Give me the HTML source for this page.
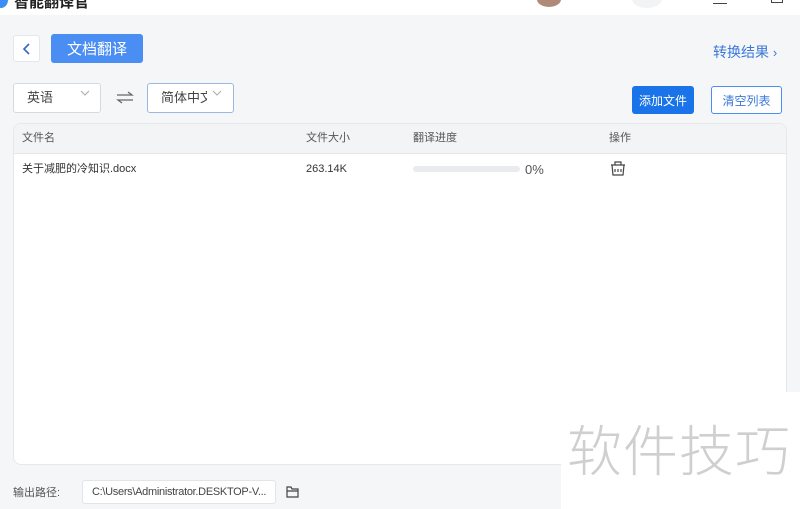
<!DOCTYPE html>
<html><head><meta charset="utf-8"><style>
*{margin:0;padding:0;box-sizing:border-box}
body{width:800px;height:509px;overflow:hidden;background:#f5f6f8;font-family:"Liberation Sans","Noto Sans CJK SC",sans-serif;position:relative;color:#333}
.a{position:absolute}
.top{left:0;top:0;width:800px;height:15px;background:#fff}
.btn{display:flex;align-items:center;justify-content:center}
.t{line-height:14px}
</style></head><body>
<div class="a top"></div>
<div class="a" style="left:-6px;top:-8px;width:14px;height:16px;border-radius:50%;background:#3a8ef6"></div>
<div class="a" style="left:14px;top:-9px;font-size:15px;font-weight:bold;color:#222">智能翻译官</div>
<div class="a" style="left:537px;top:-8px;width:24px;height:15px;border-radius:50%;background:#b08a78"></div>
<div class="a" style="left:632px;top:-10px;width:30px;height:18px;border-radius:50%;background:#f2f3f5"></div>
<div class="a" style="left:713px;top:3px;width:14px;height:1px;background:#444"></div>
<div class="a" style="left:771px;top:-6px;width:12px;height:9px;border:1px solid #444"></div>

<div class="a btn" style="left:13px;top:35px;width:27px;height:27px;background:#fff;border:1px solid #e3e6eb;border-radius:3px">
<svg width="10" height="12" viewBox="0 0 10 12"><path d="M7 1 L2 6 L7 11" stroke="#3566c8" stroke-width="1.6" fill="none"/></svg></div>
<div class="a btn" style="left:51px;top:34px;width:92px;height:29px;background:#4a8ef4;border-radius:3px;color:#fff;font-size:15px">文档翻译</div>
<div class="a t" style="left:713px;top:45px;font-size:14px;color:#3b78d8">转换结果 <span style="font-size:13px">›</span></div>

<div class="a" style="left:13px;top:83px;width:88px;height:30px;background:#fff;border:1px solid #d6d9de;border-radius:3px"></div>
<div class="a t" style="left:27px;top:91px;font-size:13px;color:#444">英语</div>
<svg class="a" style="left:80px;top:90px" width="10" height="6" viewBox="0 0 10 6"><path d="M1 1 L5 5 L9 1" stroke="#aaa" fill="none"/></svg>
<svg class="a" style="left:116px;top:91px" width="18" height="13" viewBox="0 0 18 13"><path d="M1 4 H16 L12 1 M17 9 H2 L6 12" stroke="#666" stroke-width="1.3" fill="none"/></svg>
<div class="a" style="left:147px;top:83px;width:87px;height:30px;background:#fff;border:1px solid #9cb8e0;border-radius:3px"></div>
<div class="a t" style="left:161px;top:91px;font-size:13px;color:#444;width:46px;overflow:hidden;white-space:nowrap">简体中文</div>
<svg class="a" style="left:212px;top:90px" width="10" height="6" viewBox="0 0 10 6"><path d="M1 1 L5 5 L9 1" stroke="#aaa" fill="none"/></svg>

<div class="a btn" style="left:632px;top:86px;width:62px;height:28px;background:#1a73e8;border-radius:3px;color:#fff;font-size:12px">添加文件</div>
<div class="a btn" style="left:711px;top:86px;width:71px;height:28px;background:#fff;border:1px solid #4a8ef4;border-radius:3px;color:#3b78d8;font-size:12px">清空列表</div>

<div class="a" style="left:13px;top:123px;width:774px;height:342px;background:#fff;border:1px solid #e6e8ec;border-radius:8px;overflow:hidden">
<div style="height:30px;background:#f3f4f6;border-bottom:1px solid #e6e8ec"></div>
</div>
<div class="a t" style="left:22px;top:131px;font-size:11px;color:#555">文件名</div>
<div class="a t" style="left:306px;top:131px;font-size:11px;color:#555">文件大小</div>
<div class="a t" style="left:413px;top:131px;font-size:11px;color:#555">翻译进度</div>
<div class="a t" style="left:609px;top:131px;font-size:11px;color:#555">操作</div>
<div class="a t" style="left:22px;top:162px;font-size:11px;color:#333">关于减肥的冷知识.docx</div>
<div class="a t" style="left:306px;top:162px;font-size:11px;color:#333">263.14K</div>
<div class="a" style="left:413px;top:166px;width:107px;height:6px;background:#e9ebef;border-radius:3px"></div>
<div class="a t" style="left:525px;top:163px;font-size:13px;color:#555">0%</div>
<svg class="a" style="left:610px;top:161px" width="16" height="15" viewBox="0 0 16 15"><path d="M5 4 V1 H11 V4 M1 4 H15 M2 4 L3 14 H13 L14 4 M5 8 V11 M8 8 V11 M11 8 V11" stroke="#444" stroke-width="1.2" fill="none"/></svg>

<div class="a t" style="left:13px;top:486px;font-size:11px;color:#555">输出路径:</div>
<div class="a" style="left:82px;top:480px;width:194px;height:24px;background:#fff;border:1px solid #e1e4e8;border-radius:3px;font-size:11px;color:#444;padding:5px 0 0 9px;white-space:nowrap;overflow:hidden;letter-spacing:-0.3px">C:\Users\Administrator.DESKTOP-V...</div>
<svg class="a" style="left:286px;top:486px" width="14" height="12" viewBox="0 0 14 12"><path d="M1 1 H5 L6 3 H12 V11 H1 Z M1 5 H12" stroke="#444" stroke-width="1.2" fill="none"/></svg>

<div class="a" style="left:561px;top:392px;width:239px;height:117px;background:#fff"></div>
<div class="a" style="left:567px;top:414px;font-size:55px;color:#cfcfcf;font-family:'Noto Sans CJK SC',sans-serif;font-weight:300;letter-spacing:1px;line-height:66px">软件技巧</div>
</body></html>
